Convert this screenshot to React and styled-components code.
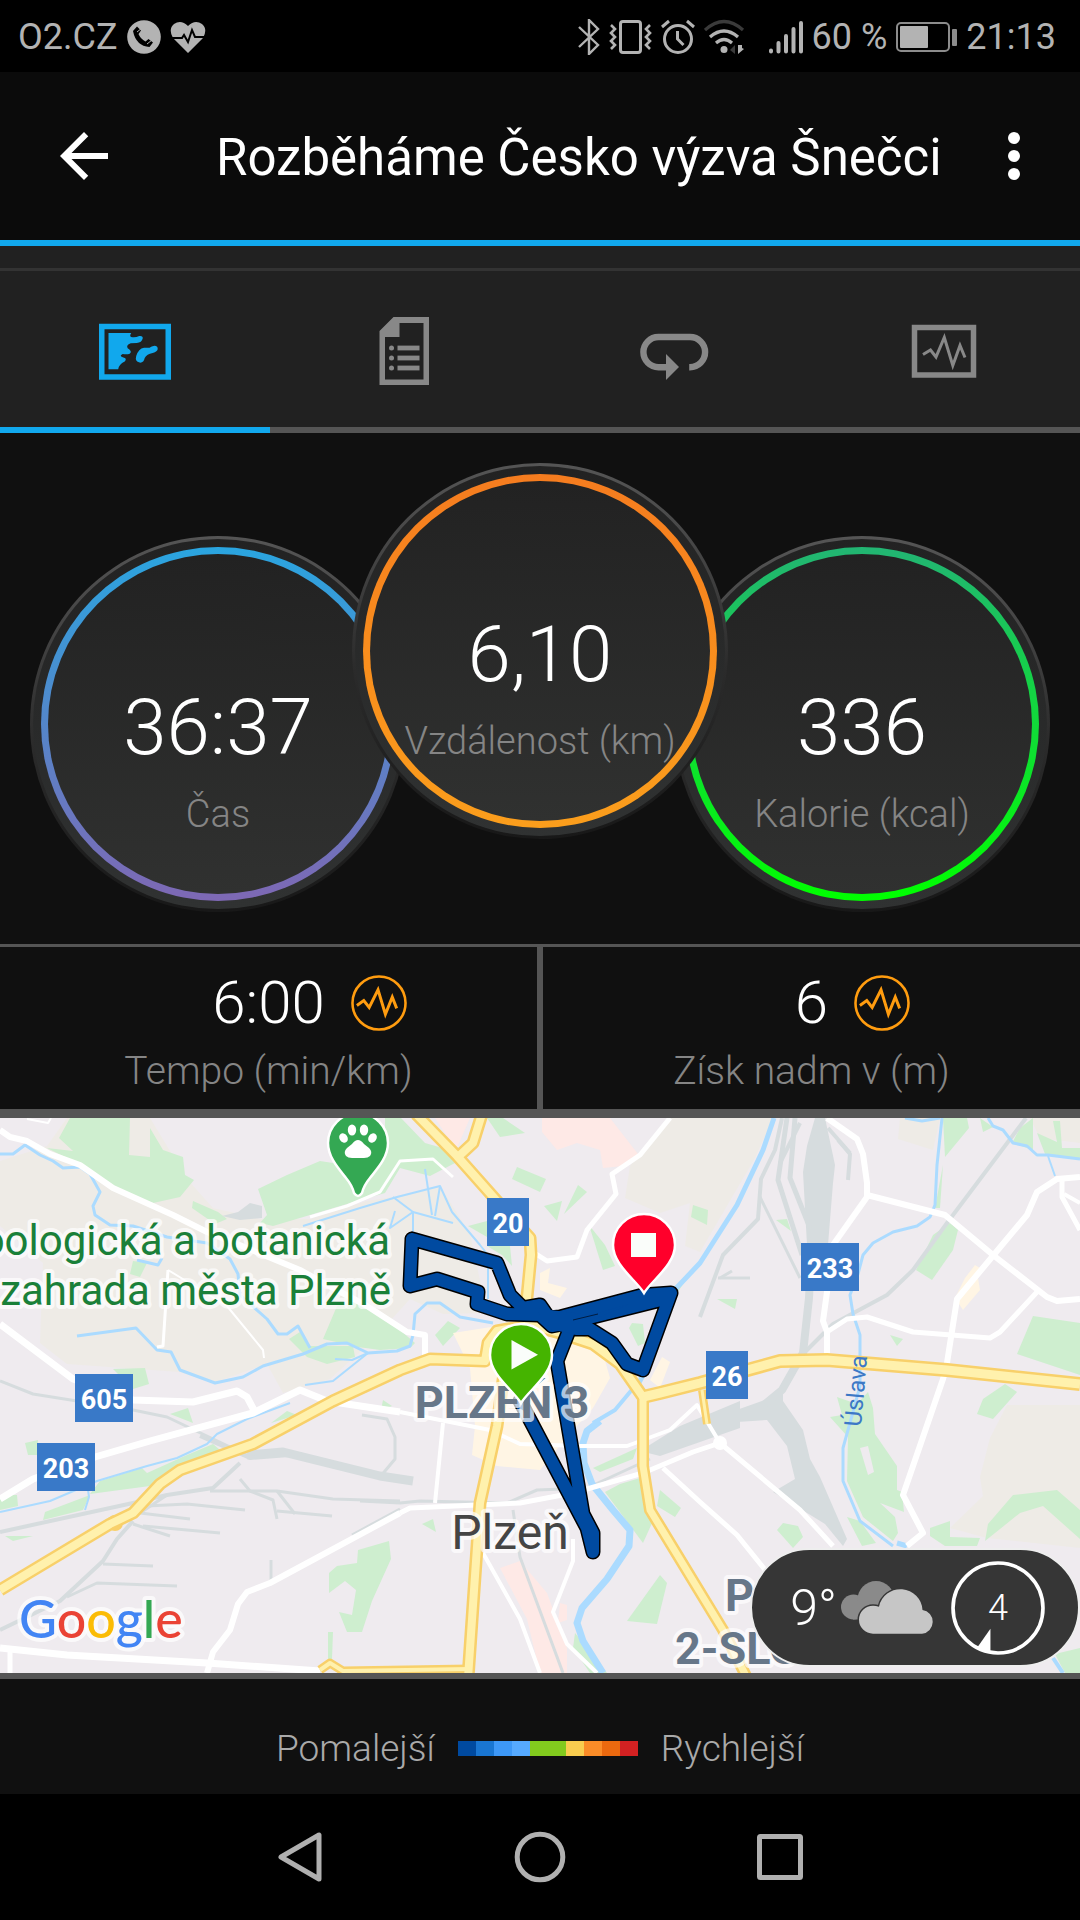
import React, { useState } from 'react'
import styled, { createGlobalStyle } from 'styled-components'

const App = () => {
  const [active, setActive] = useState('map')

  return (
    <Page>
      <GlobalStyle />
      <StatusBar />
      <Header>
        <IconButton aria-label="Zpět">
          <svg width="72" height="72" viewBox="0 0 24 24" fill="#fff">
            <path d="M20 11H7.83l5.59-5.59L12 4l-8 8 8 8 1.41-1.41L7.83 13H20v-2z" />
          </svg>
        </IconButton>
        <h1>Rozběháme Česko výzva Šnečci</h1>
        <IconButton aria-label="Další možnosti">
          <svg width="72" height="72" viewBox="0 0 24 24" fill="#fff">
            <circle cx="12" cy="6" r="2" />
            <circle cx="12" cy="12" r="2" />
            <circle cx="12" cy="18" r="2" />
          </svg>
        </IconButton>
      </Header>

      <Tabs role="tablist">
        {tabs.map(({ id, label, Icon }) => (
          <Tab key={id} role="tab" aria-label={label} aria-selected={active === id} $active={active === id} onClick={() => setActive(id)}>
            <svg width="72" height="72" viewBox="0 0 72 72"><Icon /></svg>
          </Tab>
        ))}
      </Tabs>

      <Dials>
        {dials.map((d) => (
          <Dial key={d.label} $front={d.front}>
            <Ring $from={d.from} $to={d.to}>
              <DialValue>{d.value}</DialValue>
              <Label>{d.label}</Label>
            </Ring>
          </Dial>
        ))}
      </Dials>

      <Stats>
        {stats.map((s) => (
          <Stat key={s.label}>
            <StatRow>
              <StatValue>{s.value}</StatValue>
              <ChartButton aria-label="Graf">
                <svg width="56" height="56" viewBox="0 0 57 57" fill="none" stroke="#ff9c0f">
                  <circle cx="28.5" cy="28.5" r="27" strokeWidth="2.6" />
                  <path d="M6 31l7-5 5.5 7 9-18 7.500 25 7-17.500 4.500 11.500" strokeWidth="3" />
                </svg>
              </ChartButton>
            </StatRow>
            <StatLabel>{s.label}</StatLabel>
          </Stat>
        ))}
      </Stats>

      <MapBox>
        <CityMap />
        <Weather>
          <Temp>9°</Temp>
          <Clouds />
          <Wind>
            <svg width="94" height="94" viewBox="0 0 93 93">
              <circle cx="46.5" cy="46.5" r="44.5" fill="none" stroke="#fff" strokeWidth="3.6" />
              <path d="M39 67v24l-13-5.500z" fill="#fff" />
            </svg>
            <span>4</span>
          </Wind>
        </Weather>
      </MapBox>

      <Legend>
        <span>Pomalejší</span>
        <Scale>
          {paceColors.map((c, i) => <Swatch key={i} $color={c} />)}
        </Scale>
        <span>Rychlejší</span>
      </Legend>

      <NavBar>
        <NavButton aria-label="Zpět">
          <svg width="56" height="56" viewBox="0 0 56 56"><path d="M47 6v44L9 28z" /></svg>
        </NavButton>
        <NavButton aria-label="Domů">
          <svg width="56" height="56" viewBox="0 0 56 56"><circle cx="28" cy="28" r="22.8" /></svg>
        </NavButton>
        <NavButton aria-label="Přehled">
          <svg width="56" height="56" viewBox="0 0 56 56"><rect x="7.500" y="7.500" width="41" height="41" rx="1" /></svg>
        </NavButton>
      </NavBar>
    </Page>
  )
}

export default App

/* ---------- status bar ---------- */

const StatusBar = () => (
  <Status>
    <StatusGroup>
      <span>O2.CZ</span>
      <svg width="34" height="34" viewBox="0 0 34 34">
        <circle cx="17" cy="17" r="16.800" fill="#b3b3b3" />
        <path d="M6 11l4-4.500 4 4-2.500 3.500q2 5 7 7.500l3-2.500 4.500 3.500-3.500 4.500Q9 26 6 11z" fill="#000" />
        <path d="M10 12l5-4M20 24l5-4" stroke="#b3b3b3" strokeWidth="1" />
      </svg>
      <svg width="36" height="34" viewBox="0 0 36 34">
        <path d="M18 33L3 18Q-2 9 4 4q7-5 14 2 7-7 14-2 6 5 1 14z" fill="#b3b3b3" />
        <path d="M0 18h12l2-3 4 7 4-12 3 7h11" fill="none" stroke="#000" strokeWidth="2" />
      </svg>
    </StatusGroup>
    <StatusGroup>
      <svg width="22" height="36" viewBox="0 0 22 36" fill="none" stroke="#b3b3b3" strokeWidth="2.400">
        <path d="M1 8l19 18-9 9V1l9 9L1 28" />
      </svg>
      <svg width="43" height="36" viewBox="0 0 43 36" fill="none" stroke="#b3b3b3" strokeWidth="3">
        <rect x="11.500" y="2.500" width="20" height="31" rx="2.500" />
        <path d="M2 6l4 4-4 4 4 4-4 4 4 4-4 4M41 6l-4 4 4 4-4 4 4 4-4 4 4 4" strokeWidth="2.600" />
      </svg>
      <svg width="34" height="36" viewBox="0 0 34 36" fill="none" stroke="#b3b3b3" strokeWidth="3">
        <circle cx="17" cy="20" r="13.500" />
        <path d="M16.500 12v8l6 6M1 8l7-6M33 8l-7-6" />
      </svg>
      <svg width="56" height="36" viewBox="0 0 56 36" fill="none" stroke="#b3b3b3" strokeWidth="3.200">
        <path d="M1 11q19-17 38 0" stroke="#3a3a3a" />
        <path d="M6 18q14-12 28 0M12 24q8-7 16 0" />
        <circle cx="20" cy="30.500" r="3.500" fill="#b3b3b3" stroke="none" />
        <path d="M31 26v9l-5-4z" fill="#3a3a3a" stroke="none" />
        <path d="M34 26v9l6-5-2-1v-3z" fill="#b3b3b3" stroke="none" />
      </svg>
      <svg width="34" height="36" viewBox="0 0 34 36" stroke="#b3b3b3" strokeWidth="4" strokeLinecap="round">
        <path d="M2 31.500v1M9.500 24v8.500M17 17v15.500M24.500 10v22.500M32 4v28.500" />
      </svg>
      <span>60 %</span>
      <svg width="61" height="30" viewBox="0 0 61 30">
        <rect x="1" y="1" width="52" height="28" rx="4" fill="none" stroke="#8c8c8c" strokeWidth="2" />
        <rect x="4" y="4" width="28" height="22" rx="1" fill="#b3b3b3" />
        <rect x="56" y="7" width="5" height="17" rx="1" fill="#8c8c8c" />
      </svg>
      <span>21:13</span>
    </StatusGroup>
  </Status>
)

/* ---------- tab icons ---------- */

const MapIcon = () => (
  <>
    <rect x="2.750" y="11.500" width="66.500" height="50.500" fill="none" stroke="currentColor" strokeWidth="5.500" />
    <path
      fill="currentColor"
      d="M9.500 18h22.700q-2 3 0 4 4 1 8-1 4-.500 3.500 2.500-1 4-6 4.500l-6 .300q-5 2-3 5 5 3 2 5.500-3 1-7 .200-4 2 0 3.200 5 1 2 4.300-6 3-6.500 7.800H9.500z"
    />
    <path fill="currentColor" d="M45 32.700h5.500q2-1.500 5-2 3.500.300 3.200 3.300-.200 2.500-5 4-6 1-8 5-1 5-5 4.600-5-1-3.500-6.600Q39.500 33.500 45 32.700z" />
  </>
)

const DetailsIcon = () => (
  <g fill="currentColor">
    <path fillRule="evenodd" d="M24.500 2H60v68H10.500V16zM30.500 8v14H16v42.500h38.500V8z" />
    {[33, 43, 53].map((y) => (
      <React.Fragment key={y}>
        <circle cx="22.500" cy={y} r="2.500" />
        <rect x="28.500" y={y - 2.4} width="22" height="4.800" />
      </React.Fragment>
    ))}
  </g>
)

const LapsIcon = () => (
  <>
    <path d="M30 52.200H19.500a15 15 0 0 1 0-30.200h31.500a15 15 0 0 1 0 30.200h-.800" fill="none" stroke="currentColor" strokeWidth="6.400" />
    <path d="M27 39l13 13-13 13z" fill="currentColor" />
  </>
)

const ChartIcon = () => (
  <g fill="none" stroke="currentColor">
    <rect x="5.500" y="12.500" width="59" height="47.500" strokeWidth="5.500" />
    <path d="M14 39.500l7.500-4.500 5.500 7 8.300-19.500 8.500 28 7.200-20 5 12" strokeWidth="3" />
  </g>
)

const tabs = [
  { id: 'map', label: 'Mapa', Icon: MapIcon },
  { id: 'details', label: 'Podrobnosti', Icon: DetailsIcon },
  { id: 'laps', label: 'Kola', Icon: LapsIcon },
  { id: 'charts', label: 'Grafy', Icon: ChartIcon },
]

const dials = [
  { value: '36:37', label: 'Čas', from: '#2aa5e0', to: '#7e68b4' },
  { value: '6,10', label: 'Vzdálenost (km)', from: '#f57c1f', to: '#fb9e1c', front: true },
  { value: '336', label: 'Kalorie (kcal)', from: '#22b573', to: '#00ff00' },
]

const stats = [
  { value: '6:00', label: 'Tempo (min/km)' },
  { value: '6', label: 'Získ nadm v (m)' },
]

const paceColors = ['#004aa0', '#1976d2', '#3d98f7', '#56aaff', '#82cb1e', '#82cb1e', '#f9cd4f', '#fa8c28', '#eb690f', '#d32122']

/* ---------- map ---------- */

const beige = [
  '0,43 47,28 67,0 150,0 187,61 213,90 260,101 310,101 367,83 393,79 440,68 470,116 487,195 443,196 410,181 370,225 330,261 283,275 267,246 213,265 180,254 67,246 40,225 43,145 0,108',
  '670,0 773,0 755,40 700,134 685,128 690,85 660,95 625,80 630,48 645,30',
  '900,0 940,0 933,32 898,21',
  '1030,0 1080,0 1080,25 1040,20',
  '1007,287 1080,287 1080,430 987,420 950,410 983,378 980,359 990,320',
]

const parks = [
  '70,0 130,0 129,37 150,39 150,10 163,32 183,39 185,57 194,62 180,79 153,85 113,72 87,50 47,30 73,33 59,20',
  '193,83 218,94 227,101 215,106 192,90',
  '258,71 287,57 320,43 333,45 385,10 385,0 401,0 425,25 460,35 455,45 430,58 400,50 385,75 347,86 310,97 273,108 260,105 267,97',
  '133,143 147,145 140,159 130,156',
  '337,188 360,181 380,199 400,212 415,225 410,230 380,232 358,229 323,221',
  '300,214 310,228 353,228 355,239 327,246 307,239 289,221',
  '113,251 145,250 149,266 133,271',
  '25,325 38,322 37,337 28,337',
  '170,296 188,290 193,305',
  '90,376 100,363 142,350 147,355 187,337 213,326 220,332 177,350 150,368',
  '0,377 17,377 18,388 0,392',
  '45,394 90,377 83,392 43,402',
  '5,418 33,418 13,423',
  '358,432 389,423 391,441 372,483 362,514 347,514 339,494 352,497 356,472 345,463 329,475 329,455 337,448 357,445',
  '328,514 333,514 332,541 328,541',
  '383,282 392,288 381,292',
  '287,293 297,297 271,305',
  '487,0 503,0 525,15 500,19',
  '517,49 546,61 540,74 512,61',
  '578,67 587,74 564,96',
  '562,83 557,103 544,88',
  '468,108 487,103 487,119',
  '487,128 510,128 512,148 502,137',
  '589,107 605,127 615,148 603,152',
  '448,203 460,210 443,228 435,217',
  '632,205 643,206 645,225 638,228 629,210',
  '693,87 708,92 707,107 691,99',
  '688,159 672,170 673,181',
  '717,181 737,181 735,191',
  '605,374 620,366 640,360 653,403 643,425',
  '660,372 681,390 675,399 657,388',
  '433,401 436,414 422,406',
  '660,457 667,465 657,506 627,503',
  '575,515 607,555 590,555 573,530',
  '593,350 637,330 633,341 600,354',
  '943,0 967,0 969,10 945,39',
  '943,47 940,90 935,90',
  '980,0 993,9 983,14',
  '1020,10 1033,0 1033,32 1012,25',
  '1053,3 1060,3 1062,30 1080,30 1080,41 1045,36 1037,15 1057,24',
  '933,117 950,105 958,112 953,132 932,162 916,152',
  '776,102 787,101 791,113',
  '890,217 903,221 897,228',
  '1033,198 1080,205 1080,257 1017,236',
  '1005,266 1017,274 993,301 977,296 983,281',
  '868,274 873,290 875,316 897,348 897,372 902,374 904,394 880,385 895,399 898,415 893,423 863,399 847,363 848,319 830,299 842,297 837,279 857,286',
  '777,412 783,405 798,408 803,419 793,430',
  '847,399 860,403 876,425 862,428',
  '930,410 950,403 950,419 980,420 977,428 945,428 930,418',
  '985,423 988,406 1013,377 1057,372 1080,392 1080,421 1043,388 1020,395',
  '1055,536 1080,530 1080,555 1065,555',
]

const pink = [
  '542,0 610,0 638,36 623,48 603,50 600,32 577,25 557,32 542,14',
  '435,0 470,0 456,32',
  '500,450 520,443 547,475 567,530 567,555 540,555 527,501',
  '560,485 567,487 567,502 558,505',
]

const cream = [
  '453,215 510,206 600,225 610,260 593,290 567,319 540,352 497,348 472,337 475,308 470,250',
  '540,155 550,150 548,165 567,170 560,180 540,172',
  '662,239 670,244 660,270 650,262',
  '975,147 983,152 978,160 980,172 963,192 955,180 965,160',
]

const railYards = [
  '815,0 825,0 835,47 833,65 828,127 807,127 803,54 807,28',
  '700,305 773,279 783,270 783,283 803,312 810,341 820,359 847,421 843,428 825,406 773,374 795,361 787,328 767,302 737,304 705,320',
  '640,333 680,308 740,283 740,310 660,338',
  '238,94 250,85 262,88 262,100 240,102 222,98',
]

const rails = [
  [8, '812,120 809,180 803,235 782,272 765,286'],
  [4, '782,0 775,32 761,61 758,101 723,137 700,199'],
  [5, '787,0 778,62 802,137'],
  [5, '795,0 790,60 810,110'],
  [4, '800,5 780,45'],
  [3, '760,79 800,160'],
  [3, '720,160 732,153'],
  [3, '718,160 750,160'],
  [4, '828,10 850,35'],
  [4, '838,22 850,36 848,62'],
  [4, '1026,0 947,105 913,152 887,177 833,206 803,236'],
  [3, '360,383 400,385 420,383 507,385 537,372 587,370 650,341'],
  [3, '513,392 520,439 563,555'],
  [3, '0,263 33,276 77,283 133,292 167,299 190,310 247,337'],
  [9, '247,337 283,334 380,358 413,363'],
  [4, '200,318 250,340 302,336'],
  [4, '240,345 213,370 167,377 133,385 0,414'],
  [3, '210,373 277,373 333,381 400,383'],
  [3, '277,373 295,396'],
  [3, '240,361 250,373 273,382 277,401'],
  [3, '277,393 332,398'],
  [3, '147,388 187,386 245,392'],
  [3, '167,377 140,395 190,401'],
  [3, '133,406 170,418'],
  [3, '143,408 220,415'],
  [4, '133,403 117,421 103,443 60,483 0,512'],
  [3, '103,446 153,448'],
  [3, '67,479 97,465 177,468'],
  [3, '362,297 387,301 395,319 395,341 380,359'],
  [3, '400,391 352,417'],
  [3, '271,442 271,463'],
]

const waters = [
  [3, '0,36 13,36 25,27 40,37 53,43 63,50 80,49 90,56 100,74 93,88 95,97 110,107 133,108 167,119 207,125 230,141 238,156 240,177 267,201 278,216 287,216 298,208 310,230'],
  [3, '77,218 136,210 157,232 171,234 180,252 215,265 243,259 263,248 303,236 327,226 347,225 368,235 397,233 410,228 413,217 415,196 427,185 440,185 460,199 493,205'],
  [2, '368,235 333,263 305,267'],
  [2, '335,241 352,242 368,235'],
  [2, '290,285 247,301 217,316 207,326 177,340 147,348 97,363 50,383 0,394'],
  [2, '88,372 89,379 85,392'],
  [3, '137,142 158,147 162,140'],
  [2, '303,108 360,90 397,79 440,68 452,94 480,127 488,137 488,181'],
  [2, '393,79 413,94 453,105'],
  [2, '395,93 390,110 413,94 413,160'],
  [2, '425,51 432,97'],
  [2, '440,68 435,98'],
  [5, '774,0 763,32 737,87 700,145 667,180 655,225 647,250 636,270'],
  [4, '640,262 615,292 593,305'],
  [7, '600,303 587,313 583,325 584,345 592,366 613,392 630,412 629,428 607,461 582,490 577,505 583,523 603,555'],
  [3, '942,0 937,47 935,87 930,99 917,108 893,114 873,125 863,137 858,156 850,177 853,196 860,217 860,268 853,294 843,330 843,363 860,403 893,428'],
  [3, '988,0 993,8 1003,12 1013,25 1027,28 1037,37 1048,37 1080,41'],
  [2, '1048,38 1055,58'],
  [3, '905,0 922,3 940,0'],
  [4, '1053,540 1063,555'],
  [5, '897,425 907,428'],
]

const streets = [
  [6, '0,12 10,19 27,23 50,36 80,47 113,70 173,97 207,114 247,130 300,152 320,163 367,188 407,214 425,217 425,240'],
  [7, '0,206 73,261 133,282 193,284 237,273 247,279 255,294'],
  [7, '0,381 33,361 95,339 150,323 253,295 300,272 327,283 400,294'],
  [4, '400,294 490,312 520,326 580,328 627,328 670,312 697,287 720,325'],
  [7, '0,530 67,537 207,545 320,553'],
  [5, '10,534 10,555'],
  [6, '400,395 270,465 247,474 238,486 230,512 213,534 207,555'],
  [5, '400,395 410,390 520,385 573,375 643,355 693,334 720,325'],
  [4, '443,305 435,385'],
  [4, '483,435 520,501 540,555'],
  [4, '573,421 573,443 553,494 567,526 597,555'],
  [5, '670,0 640,37 612,56 616,76 587,112 577,139 547,143 533,134'],
  [5, '663,350 700,384 737,417 766,453'],
  [5, '720,325 800,392 833,428'],
  [6, '827,0 857,21 863,36 867,65 867,79 833,127 827,174 823,203 827,214 827,240'],
  [6, '867,77 945,97 993,137 1047,179 1057,183 1080,181'],
  [6, '1080,59 1057,61 1037,74 1027,97 957,181 947,245 943,261 903,377 923,415 907,428'],
  [5, '1062,61 1062,79 1080,112'],
  [4, '1064,76 1080,85'],
  [5, '827,214 847,201 867,199 913,214 990,220 1000,214 1037,174'],
  [3, '168,152 163,228 157,229'],
  [2, '168,152 227,188 263,232 264,240'],
  [3, '310,99 347,88 380,74 400,43 433,41 453,59'],
  [2, '27,1 48,5 51,0'],
]

const highways = [
  [11, '0,472 110,406 133,395 160,366 180,352 253,326 333,283 400,252 430,241 485,243 488,225 497,213 530,207 560,215 593,226 620,246 643,279'],
  [10, '643,277 643,348 650,392 723,512 747,560'],
  [12, '643,279 660,275 700,265 780,243 827,242 947,252 1080,266'],
  [11, '416,-4 457,38 512,100 530,120 531,137 525,200'],
  [11, '482,-4 473,25 459,38'],
  [11, '506,240 497,308 480,385 468,560'],
  [7, '320,552 330,545 343,553 470,551'],
  [6, '702,272 707,306'],
]

// drawn twice: a black casing below, the blue track on top
const track =
  'M412 121L497 145 510 177 523 190 540 187 549 200 560 199 643 177 671 175 643 252 627 246 612 225 590 211 577 211 570 210 557 243 583 396 593 415 593 434 587 410 520 283' +
  'M412 121L410 168 437 161 478 174 477 186 507 196 540 197 552 208 573 204 665 181'

const shields = [
  { text: '605', x: 75, y: 256, w: 58 },
  { text: '203', x: 37, y: 325, w: 58 },
  { text: '20', x: 487, y: 80, w: 42 },
  { text: '233', x: 801, y: 125, w: 58 },
  { text: '26', x: 706, y: 233, w: 42 },
]

const Areas = ({ shapes, color }) => <g fill={color}>{shapes.map((p) => <polygon key={p} points={p} />)}</g>

const Lines = ({ lines, color, extra = 0 }) => (
  <g fill="none" stroke={color} strokeLinejoin="round">
    {lines.map(([w, p]) => <polyline key={p} points={p} strokeWidth={w + extra} />)}
  </g>
)

const CityMap = () => (
  <MapSvg viewBox="0 0 1080 555" role="img" aria-label="Mapa trasy, Plzeň">
    <rect width="1080" height="555" fill="#efebef" />
    <Areas shapes={beige} color="#eeebe6" />
    <Areas shapes={parks} color="#ceeecf" />
    <Areas shapes={pink} color="#fee9e6" />
    <Areas shapes={cream} color="#fff5e4" />
    <Areas shapes={['860,330 868,328 874,354 868,357']} color="#efebef" />
    <Areas shapes={railYards} color="#d6dcde" />
    <Lines lines={rails} color="#d6dcde" />
    <Lines lines={waters} color="#abdbff" />
    <Lines lines={streets} color="#fff" />
    <circle cx="720" cy="325" r="7" fill="#fff" />
    <Lines lines={highways} color="#f8d06a" extra={2} />
    <circle cx="115" cy="405" r="8" fill="#f8d06a" />
    <Lines lines={highways} color="#fff1ad" extra={-3} />

    <g fill="none" strokeLinejoin="round" strokeLinecap="round">
      <path d={track} stroke="#000" strokeWidth="15" />
      <path d={track} stroke="#004aa0" strokeWidth="12" />
    </g>
    <path d="M535 190L590 197 630 186 590 203 575 216 552 212z" fill="#004aa0" />
    <path d="M573 202l25-6" stroke="#001c40" strokeWidth="1" />

    <Place x="390" y="137" textAnchor="end" fontSize="42" fill="#1a8039">Zoologická a botanická</Place>
    <Place x="391" y="187" textAnchor="end" fontSize="42" fill="#1a8039">zahrada města Plzně</Place>
    <Place x="502" y="300" textAnchor="middle" fontSize="45" fontWeight="700" fill="#677789">PLZEŇ 3</Place>
    <Place x="510" y="431" textAnchor="middle" fontSize="48" fill="#454545">Plzeň</Place>
    <Place x="725" y="493" fontSize="45" fontWeight="700" fill="#677789">P</Place>
    <Place x="675" y="546" fontSize="45" fontWeight="700" fill="#677789">2-SLO</Place>
    <text transform="translate(861 309) rotate(-85)" fontSize="24" fill="#3c78c6">Úslava</text>

    {shields.map((s) => (
      <g key={s.text}>
        <rect x={s.x} y={s.y} width={s.w} height="48" fill="#3979c8" />
        <text x={s.x + s.w / 2} y={s.y + 35} textAnchor="middle" fontSize="27" fontWeight="700" fill="#fff">{s.text}</text>
      </g>
    ))}

    {/* zoo */}
    <g>
      <path d="M328 25a30 30 0 0 1 60 0c0 14-10 25-18 35-5 6-7 11-8 15q-4 6-8 0c-1-4-3-9-8-15-8-10-18-21-18-35z" fill="#34a853" stroke="#fff" strokeWidth="2.500" />
      <g fill="#fff">
        <ellipse cx="343.500" cy="20" rx="4" ry="5" transform="rotate(-35 343.500 20)" />
        <ellipse cx="352" cy="12" rx="4.200" ry="5.500" />
        <ellipse cx="364" cy="12" rx="4.200" ry="5.500" />
        <ellipse cx="372.500" cy="20" rx="4" ry="5" transform="rotate(35 372.500 20)" />
        <path d="M358 22q3 0 6 4l5 4q4 4 1 8-2 2-6 2h-12q-4 0-6-2-3-4 1-8l5-4q3-4 6-4z" />
      </g>
    </g>

    {/* finish */}
    <path d="M644 175c-8-13-31-28-31-48a31 31 0 0 1 62 0c0 20-23 35-31 48z" fill="#ff002b" stroke="#fff" strokeWidth="2.500" />
    <rect x="631" y="115" width="25" height="24" fill="#fafdfa" />

    {/* start */}
    <path d="M521 285c-8-13-31-28-31-48a31 31 0 0 1 62 0c0 20-23 35-31 48z" fill="#45b400" stroke="#fff" strokeWidth="2.500" />
    <path d="M511.500 222v29.500l26.500-14.700z" fill="#fafdfa" />

    <GoogleMark x="19" y="520" fontSize="52">
      <tspan fill="#4285f4">G</tspan>
      <tspan fill="#ea4335">o</tspan>
      <tspan fill="#fbbc05">o</tspan>
      <tspan fill="#4285f4">g</tspan>
      <tspan fill="#34a853">l</tspan>
      <tspan fill="#ea4335">e</tspan>
    </GoogleMark>
  </MapSvg>
)

const Clouds = () => (
  <svg width="92" height="54" viewBox="0 0 92 54">
    <g fill="#8a8a8a">
      <circle cx="12.500" cy="26" r="12.500" />
      <circle cx="35" cy="18.500" r="18.500" />
      <path d="M12 20h24v18.500H12z" />
    </g>
    <path
      d="M32 52.700a14 14 0 0 1 0-28q3 0 6 1a22 22 0 0 1 43.500 3.200 12 12 0 0 1-.5 23.800z"
      fill="#c6c6c6"
      stroke="#363636"
      strokeWidth="3"
      paintOrder="stroke"
    />
  </svg>
)

/* ---------- styles ---------- */

const GlobalStyle = createGlobalStyle`
*{
  box-sizing: border-box;
  margin: 0;
  padding: 0;
}
body{
  background: #101010;
  font-family: Roboto, "Liberation Sans", sans-serif;
}
button{
  background: none;
  border: none;
  color: inherit;
  font: inherit;
  cursor: pointer;
}
svg{
  display: block;
  flex-shrink: 0;
}
`

const Page = styled.div`
display: flex;
flex-direction: column;
min-height: 100vh;
background: #101010;
color: #fff;
`

const Status = styled.div`
display: flex;
justify-content: space-between;
align-items: center;
height: 72px;
padding: 2px 24px 0 18px;
background: #000;
color: #b3b3b3;
font-size: 36px;
white-space: nowrap;
`

const StatusGroup = styled.div`
display: flex;
align-items: center;
gap: 9px;
`

const Header = styled.header`
display: flex;
align-items: center;
height: 174px;
padding: 0 30px 0 48px;
background: #0b0b0b;
border-bottom: 6px solid #11a8ed;
   h1{
     flex: 1;
     margin-left: 96px;
     padding-top: 4px;
     font-size: 51px;
     font-weight: 400;
     line-height: 60px;
     white-space: nowrap;
   }
`

const IconButton = styled.button`
width: 72px;
height: 72px;
`

const Tabs = styled.div`
display: flex;
padding-top: 22px;
background: #212121;
`

const Tab = styled.button`
flex: 1;
display: flex;
justify-content: center;
padding: 44px 0 40px;
border-top: 3px solid #333;
border-bottom: 6px solid ${(p) => (p.$active ? '#11a8ed' : '#555')};
color: ${(p) => (p.$active ? '#11a8ed' : '#888')};
`

const Dials = styled.div`
display: flex;
justify-content: center;
align-items: flex-end;
padding: 30px 0 32px;
`

const Dial = styled.div`
width: 376px;
height: 376px;
padding: 8px;
margin: 0 -27px;
border: 3px solid transparent;
border-radius: 50%;
background: linear-gradient(#222, #303232) padding-box, linear-gradient(#555, #444 25%, #2b2b2b 55%, #181818) border-box;
${(p) => p.$front && `
  z-index: 1;
  align-self: flex-start;
  margin-bottom: 73px;
`}
`

const Ring = styled.div`
display: flex;
flex-direction: column;
align-items: center;
height: 100%;
padding-top: 126px;
border: 7px solid transparent;
border-radius: 50%;
white-space: nowrap;
background: linear-gradient(#222, #303130) padding-box, linear-gradient(${(p) => p.$from}, ${(p) => p.$to}) border-box;
`

const DialValue = styled.div`
margin-bottom: 14px;
font-size: 78px;
font-weight: 300;
line-height: 96px;
`

const Label = styled.div`
color: #858585;
font-size: 38px;
font-weight: 300;
line-height: 48px;
`

const Stats = styled.div`
display: grid;
grid-template-columns: 1fr 1fr;
gap: 6px;
padding: 3px 0 9px;
background: #555;
`

const Stat = styled.div`
height: 162px;
padding-top: 20px;
background: #101010;
text-align: center;
`

const StatRow = styled.div`
display: grid;
grid-template-columns: 1fr auto 1fr;
align-items: center;
margin-bottom: 8px;
`

const StatLabel = styled(Label)`
font-size: 39px;
`

const StatValue = styled.div`
grid-column: 2;
font-size: 60px;
font-weight: 300;
line-height: 72px;
`

const ChartButton = styled.button`
width: 56px;
margin-left: 26px;
`

const MapBox = styled.div`
position: relative;
overflow: hidden;
border-bottom: 6px solid #555;
`

const MapSvg = styled.svg`
width: 100%;
height: auto;
`

const Place = styled.text`
stroke: rgba(255, 255, 255, .7);
stroke-width: 8px;
stroke-linejoin: round;
paint-order: stroke;
`

const GoogleMark = styled(Place)`
font-family: Lato, sans-serif;
font-weight: 500;
`

const Weather = styled.div`
position: absolute;
right: 0;
bottom: 6px;
display: flex;
align-items: center;
height: 119px;
padding: 0 33px 0 38px;
border: 2px solid #eee;
border-radius: 60px;
background: #363636;
`

const Temp = styled.span`
margin-right: 4px;
font-size: 50px;
font-weight: 300;
`

const Wind = styled.div`
display: grid;
place-items: center;
margin-left: 18px;
   svg, span{
     grid-area: 1 / 1;
   }
   span{
     font-size: 36px;
     font-weight: 300;
   }
`

const Legend = styled.div`
display: flex;
justify-content: center;
align-items: center;
gap: 23px;
height: 115px;
padding-top: 24px;
color: #aaa;
font-size: 37px;
font-weight: 300;
`

const Scale = styled.div`
display: flex;
`

const Swatch = styled.div`
width: 18px;
height: 15px;
background: ${(p) => p.$color};
`

const NavBar = styled.nav`
display: flex;
justify-content: center;
align-items: center;
flex: 1;
min-height: 126px;
background: #000;
`

const NavButton = styled.button`
display: flex;
justify-content: center;
width: 240px;
   svg{
     fill: none;
     stroke: #b0b0b0;
     stroke-width: 5;
     stroke-linejoin: round;
   }
`
